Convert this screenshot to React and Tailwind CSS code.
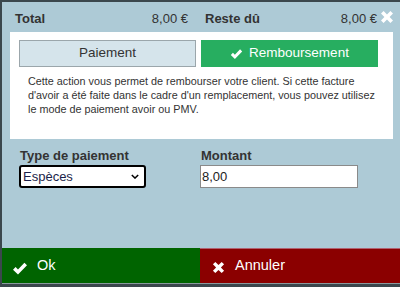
const Check = ({ className }) => (
  <svg viewBox="0 0 16 14" className={className} fill="currentColor">
    <path d="M1 8.2 L3.6 5.6 L6 8 L12.4 1.2 L15 3.8 L6 13 Z" />
  </svg>
);

const Cross = ({ className }) => (
  <svg viewBox="0 0 14 14" className={className} fill="currentColor">
    <path d="M1 3.6 L3.6 1 L7 4.4 L10.4 1 L13 3.6 L9.6 7 L13 10.4 L10.4 13 L7 9.6 L3.6 13 L1 10.4 L4.4 7 Z" />
  </svg>
);

export default function App() {
  return (
    <div
      className="w-[400px] h-[287px] bg-[#3b474d] pt-[2px] pl-[2px] pb-[3px] flex flex-col overflow-hidden"
      style={{ fontFamily: '"Liberation Sans", Arial, sans-serif' }}
    >
      <div className="flex-1 bg-[#adcad6] flex flex-col">
        {/* Header totals */}
        <div className="relative h-[30px] flex items-center text-[13px] text-[#333] pt-[3px]">
          <div className="w-[198px] flex justify-between pl-[13px] pr-[12px]">
            <span className="font-bold">Total</span>
            <span>8,00 €</span>
          </div>
          <div className="w-[198px] flex justify-between pl-[5px] pr-[21px]">
            <span className="font-bold">Reste dû</span>
            <span>8,00 €</span>
          </div>
          <Cross className="absolute right-[6px] top-[8px] w-[14px] h-[14px] text-white" />
        </div>

        {/* Mode panel */}
        <div className="ml-[8px] mr-[7px] bg-white h-[107px] px-[9px] pt-[8px]">
          <div className="flex gap-[5px]">
            <div className="w-[177px] h-[27px] bg-[#d5e4eb] border border-[#9ba6ab] flex items-center justify-center text-[13.5px] text-[#333]">
              Paiement
            </div>
            <div className="w-[177px] h-[27px] bg-[#27ae60] flex items-center justify-center gap-[6px] text-[13.5px] text-white">
              <Check className="w-[13px] h-[12px]" />
              Remboursement
            </div>
          </div>
          <p className="mt-[7px] pl-[9px] pr-[4px] text-[10.8px] leading-[14px] text-[#333]">
            Cette action vous permet de rembourser votre client. Si cette facture d'avoir a été faite dans le cadre d'un remplacement, vous pouvez utilisez le mode de paiement avoir ou PMV.
          </p>
        </div>

        {/* Fields */}
        <div className="flex mt-[9px] pl-[17px]">
          <div className="w-[181px] flex flex-col">
            <label className="text-[13px] font-bold text-[#333] leading-[16px] pl-[1px]">Type de paiement</label>
            <div className="mt-[1px] w-[127px] h-[23px] bg-white border-2 border-black rounded-[3px] flex items-center justify-between px-[2px]">
              <span className="text-[13px] text-[#1b1f4a]">Espèces</span>
              <svg viewBox="0 0 10 6" className="w-[8px] h-[5px] mr-[3px]" fill="none" stroke="black" strokeWidth="1.8">
                <path d="M1 1 L5 5 L9 1" />
              </svg>
            </div>
          </div>
          <div className="flex flex-col">
            <label className="text-[13px] font-bold text-[#333] leading-[16px] pl-[1px]">Montant</label>
            <div className="mt-[1px] w-[158px] h-[23px] bg-white border border-[#8a8a8a] flex items-center px-[1px]">
              <span className="text-[13px] text-[#222]">8,00</span>
            </div>
          </div>
        </div>

        <div className="flex-1" />

        {/* Footer */}
        <div className="flex h-[36px] border-b border-[#8a9a9f]">
          <div className="w-[198px] bg-[#006400] flex items-center text-white text-[14.5px]">
            <Check className="ml-[10px] w-[16px] h-[15px] mt-[6px]" />
            <span className="ml-[9px]">Ok</span>
          </div>
          <div className="flex-1 bg-[#8b0000] border-t border-[#b06070] flex items-center text-white text-[14.5px]">
            <Cross className="ml-[12px] w-[13px] h-[13px] mt-[3px]" />
            <span className="ml-[10px]">Annuler</span>
          </div>
        </div>
      </div>
    </div>
  );
}
